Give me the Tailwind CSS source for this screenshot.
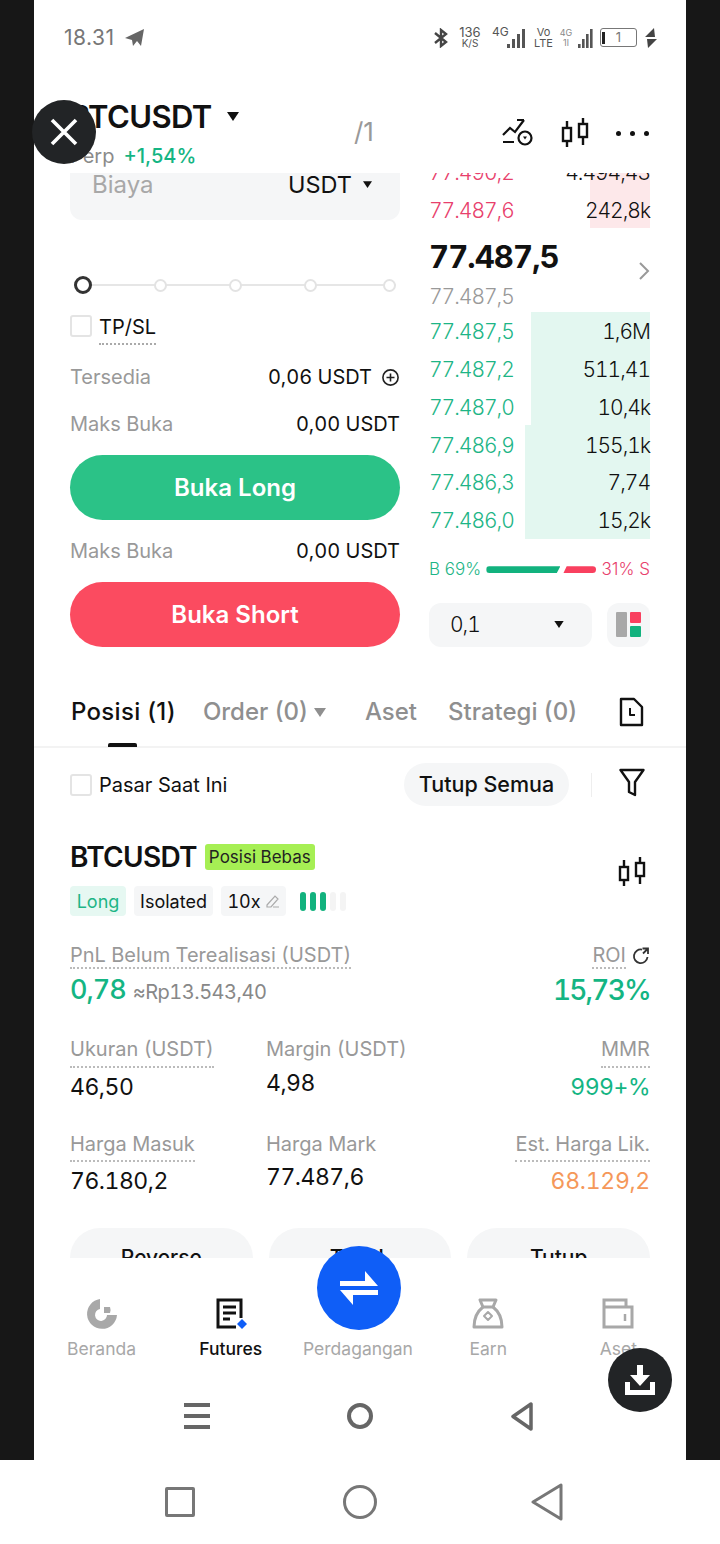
<!DOCTYPE html>
<html lang="id">
<head>
    <meta charset="UTF-8">
    <meta name="viewport" content="width=device-width, initial-scale=1.0">
    <title>BTCUSDT Futures</title>
    <script src="https://cdn.jsdelivr.net/npm/@tailwindcss/browser@4"></script>
</head>
<body class="bg-white">
<div class="relative w-[720px] h-[1544px] overflow-hidden bg-white font-['Inter','Liberation_Sans',sans-serif] text-[#111]">
    <div class="flex h-[1460px]">
        <div class="w-[34px] bg-[#171717]"></div>
        <main class="w-[652px] flex flex-col bg-white">

            <!-- status bar -->
            <div class="h-[75px] flex items-center justify-between pl-[30px] pr-[29px] text-[#666]">
                <div class="flex items-center gap-[10px]">
                    <span class="text-[21px] tracking-[0.5px] text-[#777]">18.31</span>
                    <svg class="w-[20px] h-[18px]" viewBox="0 0 20 18" fill="#666"><path d="M19 0 L0 9 L7 11 L8 17 L12 12 L16 17 Z"/></svg>
                </div>
                <div class="flex items-center text-[#555]">
                    <svg class="w-[16px] h-[20px] mr-[10px]" viewBox="0 0 16 20" fill="none" stroke="#444" stroke-width="2.4"><path d="M2 5 L13 14 L8 18 V2 L13 6 L2 15"/></svg>
                    <div class="flex flex-col items-center leading-[11px] w-[22px] mr-[11px]"><span class="text-[13px]">136</span><span class="text-[10px]">K/S</span></div>
                    <span class="text-[12px] w-[15px] -mt-[12px]">4G</span>
                    <svg class="w-[20px] h-[22px] mr-[7px]" viewBox="0 0 20 22" fill="#555"><rect x="0" y="17" width="3" height="4"/><rect x="5" y="12" width="3" height="9"/><rect x="10" y="7" width="3" height="14"/><rect x="15" y="2" width="3" height="19"/></svg>
                    <div class="flex flex-col items-center leading-[11px] text-[11px] w-[19px] mr-[6px]"><span>Vo</span><span>LTE</span></div>
                    <div class="flex flex-col items-center leading-[10px] text-[9px] text-[#888] w-[14px]"><span>4G</span><span>1l</span></div>
                    <svg class="w-[20px] h-[22px] mr-[7px]" viewBox="0 0 20 22" fill="#555"><rect x="5" y="17" width="2.6" height="4"/><rect x="9" y="12" width="2.6" height="9"/><rect x="13" y="7" width="2.6" height="14"/><rect x="17" y="2" width="2.6" height="19"/></svg>
                    <div class="relative w-[37px] h-[19px] border-[1.5px] border-[#777] rounded-[3px] flex items-center justify-center text-[13px] text-[#777] leading-none">
                        <span class="absolute left-[1px] top-[3px] bottom-[2px] w-[3px] bg-[#222]"></span>1
                    </div>
                    <svg class="w-[12px] h-[20px] ml-[8px]" viewBox="0 0 12 20" fill="#444"><path d="M9 0 L0 9 H10 Z M3 20 L12 11 H2 Z"/></svg>
                </div>
            </div>

            <!-- pair header -->
            <div class="relative h-[98px] bg-white flex justify-between px-[36px]">
                <div class="pt-[23px]">
                    <div class="flex items-center gap-[15px] h-[36px]">
                        <span class="text-[31px] font-semibold tracking-[-0.6px] leading-none">BTCUSDT</span>
                        <svg class="w-[12px] h-[9px] mt-[1px]" viewBox="0 0 12 9" fill="#111"><path d="M0 0 H12 L6 9 Z"/></svg>
                    </div>
                    <div class="flex items-center gap-[9px] mt-[11px] text-[20px] leading-[22px]">
                        <span class="text-[#8a8a8a]">Perp</span>
                        <span class="text-[#14b583] font-medium">+1,54%</span>
                    </div>
                </div>
                <span class="absolute left-[320px] top-[43px] text-[26px] leading-[28px] text-[#999]">/1</span>
                <div class="flex items-start gap-[27px] pt-[43px] pr-[1px]">
                    <svg class="w-[32px] h-[30px]" viewBox="0 0 32 30" fill="none" stroke="#111" stroke-width="2.2"><path d="M1 17 L8 10 L13 14 L22 2 M15 2 H22 M1 24 H12"/><circle cx="23" cy="20" r="6.5"/><path d="M21 18.5 H25 L23 21.5 Z" fill="#111" stroke="none"/></svg>
                    <svg class="w-[28px] h-[30px]" viewBox="0 0 28 30" fill="none" stroke="#111" stroke-width="2.4"><rect x="2" y="10" width="8" height="13"/><rect x="18" y="6" width="8" height="13"/><path d="M6 3 V10 M6 23 V29 M22 0 V6 M22 19 V27"/></svg>
                    <div class="flex gap-[9px] pt-[13px]">
                        <span class="w-[5px] h-[5px] rounded-full bg-[#111]"></span>
                        <span class="w-[5px] h-[5px] rounded-full bg-[#111]"></span>
                        <span class="w-[5px] h-[5px] rounded-full bg-[#111]"></span>
                    </div>
                </div>
            </div>

            <!-- order form and book -->
            <div class="h-[503px] overflow-hidden flex gap-[29px] px-[36px]">
                <div class="w-[330px] flex flex-col">
                    <div class="h-[47px] shrink-0 bg-[#f5f6f7] rounded-b-[12px] flex justify-between pl-[22px] pr-[28px]">
                        <span class="text-[24px] leading-[24px] text-[#a8a8a8]">Biaya</span>
                        <div class="flex items-start gap-[11px]">
                            <span class="text-[23.5px] leading-[24px]">USDT</span>
                            <svg class="w-[9px] h-[7px] mt-[8px]" viewBox="0 0 12 9" fill="#111"><path d="M0 0 H12 L6 9 Z"/></svg>
                        </div>
                    </div>
                    <!-- leverage slider -->
                    <div class="relative h-[20px] mt-[55px] mx-[4px] flex items-center gap-[62px]">
                        <div class="absolute inset-x-0 top-[9px] h-[2px] bg-[#e6e6e6]"></div>
                        <span class="relative w-[18px] h-[18px] rounded-full border-[3px] border-[#333] bg-white"></span>
                        <span class="relative w-[13px] h-[13px] rounded-full border-2 border-[#e3e3e3] bg-white"></span>
                        <span class="relative w-[13px] h-[13px] rounded-full border-2 border-[#e3e3e3] bg-white"></span>
                        <span class="relative w-[13px] h-[13px] rounded-full border-2 border-[#e3e3e3] bg-white"></span>
                        <span class="relative w-[13px] h-[13px] ml-[4px] rounded-full border-2 border-[#e3e3e3] bg-white"></span>
                    </div>
                    <div class="flex items-start gap-[7px] mt-[20px] h-[33px]">
                        <span class="w-[22px] h-[22px] border-2 border-[#e4e4e4] rounded-[3px]"></span>
                        <span class="text-[20px] leading-[24px] pb-[4px] border-b-2 border-dotted border-[#aaa]">TP/SL</span>
                    </div>
                    <div class="flex items-center justify-between h-[26px] mt-[16px]">
                        <span class="text-[20px] text-[#999]">Tersedia</span>
                        <div class="flex items-center gap-[9px] text-[20px] tabular-nums">
                            <span>0,06 USDT</span>
                            <svg class="w-[19px] h-[19px]" viewBox="0 0 19 19" fill="none" stroke="#222" stroke-width="1.6"><circle cx="9.5" cy="9.5" r="7.6"/><path d="M9.5 5.5 V13.5 M5.5 9.5 H13.5"/></svg>
                        </div>
                    </div>
                    <div class="flex items-center justify-between h-[26px] mt-[21px] text-[20px] tabular-nums">
                        <span class="text-[#999]">Maks Buka</span>
                        <span>0,00 USDT</span>
                    </div>
                    <button class="h-[65px] shrink-0 mt-[18px] rounded-full bg-[#2bc287] text-white text-[24px] font-semibold">Buka Long</button>
                    <div class="flex items-center justify-between h-[26px] mt-[18px] text-[20px] tabular-nums">
                        <span class="text-[#999]">Maks Buka</span>
                        <span>0,00 USDT</span>
                    </div>
                    <button class="h-[65px] shrink-0 mt-[18px] rounded-full bg-[#fb4b60] text-white text-[24px] font-semibold">Buka Short</button>
                </div>

                <div class="w-[221px] flex flex-col text-[21px] tabular-nums tracking-[-1px] font-[350]">
                    <div class="h-[19px] shrink-0 overflow-hidden relative">
                        <div class="absolute right-0 top-0 bottom-0 w-[60px] bg-[#fde8ea]"></div>
                        <div class="absolute left-0 right-0 -top-[19px] h-[38px] flex justify-between items-center">
                            <span class="text-[#e8406c]">77.490,2</span>
                            <span class="relative">4.494,43</span>
                        </div>
                    </div>
                    <div class="relative h-[36px] shrink-0 pt-[1px] flex justify-between items-center">
                        <div class="absolute right-0 top-0 bottom-0 w-[60px] bg-[#fde8ea]"></div>
                        <span class="relative text-[#e8406c]">77.487,6</span>
                        <span class="relative">242,8k</span>
                    </div>
                    <div class="flex justify-between items-center h-[50px] shrink-0 mt-[4px]">
                        <span class="text-[31px] font-bold tracking-[-0.9px]">77.487,5</span>
                        <svg class="w-[12px] h-[20px] mt-[28px]" viewBox="0 0 12 20" fill="none" stroke="#999" stroke-width="2"><path d="M2 2 L10 10 L2 18"/></svg>
                    </div>
                    <div class="h-[30px] shrink-0 leading-[30px] text-[#999]">77.487,5</div>
                    <div class="relative h-[37.8px] shrink-0 pt-[2px] flex justify-between items-center">
                        <div class="absolute right-0 top-0 bottom-0 w-[119px] bg-[#e3f7f0]"></div>
                        <span class="relative text-[#1db586]">77.487,5</span><span class="relative">1,6M</span>
                    </div>
                    <div class="relative h-[37.8px] shrink-0 pt-[2px] flex justify-between items-center">
                        <div class="absolute right-0 top-0 bottom-0 w-[119px] bg-[#e3f7f0]"></div>
                        <span class="relative text-[#1db586]">77.487,2</span><span class="relative">511,41</span>
                    </div>
                    <div class="relative h-[37.8px] shrink-0 pt-[2px] flex justify-between items-center">
                        <div class="absolute right-0 top-0 bottom-0 w-[119px] bg-[#e3f7f0]"></div>
                        <span class="relative text-[#1db586]">77.487,0</span><span class="relative">10,4k</span>
                    </div>
                    <div class="relative h-[37.8px] shrink-0 pt-[2px] flex justify-between items-center">
                        <div class="absolute right-0 top-0 bottom-0 w-[125px] bg-[#e3f7f0]"></div>
                        <span class="relative text-[#1db586]">77.486,9</span><span class="relative">155,1k</span>
                    </div>
                    <div class="relative h-[37.8px] shrink-0 pt-[2px] flex justify-between items-center">
                        <div class="absolute right-0 top-0 bottom-0 w-[125px] bg-[#e3f7f0]"></div>
                        <span class="relative text-[#1db586]">77.486,3</span><span class="relative">7,74</span>
                    </div>
                    <div class="relative h-[37.8px] shrink-0 pt-[2px] flex justify-between items-center">
                        <div class="absolute right-0 top-0 bottom-0 w-[125px] bg-[#e3f7f0]"></div>
                        <span class="relative text-[#1db586]">77.486,0</span><span class="relative">15,2k</span>
                    </div>
                    <!-- buy/sell ratio -->
                    <div class="flex items-center justify-between h-[24px] shrink-0 mt-[19px] text-[17px] normal-nums tracking-normal">
                        <span class="text-[#1db586]">B 69%</span>
                        <div class="flex items-center gap-[3px]">
                            <span class="w-[74px] h-[7px] rounded-l-full bg-[#12b27e] [clip-path:polygon(0_0,100%_0,95%_100%,0_100%)]"></span>
                            <span class="w-[33px] h-[7px] rounded-r-full bg-[#f9405f] [clip-path:polygon(10%_0,100%_0,100%_100%,0_100%)]"></span>
                        </div>
                        <span class="text-[#e8406c]">31% S</span>
                    </div>
                    <div class="flex gap-[15px] mt-[21px]">
                        <div class="w-[163px] h-[44px] rounded-[12px] bg-[#f5f6f7] flex items-center justify-between pl-[21px] pr-[28px]">
                            <span class="text-[21px]">0,1</span>
                            <svg class="w-[10px] h-[7px]" viewBox="0 0 12 9" fill="#111"><path d="M0 0 H12 L6 9 Z"/></svg>
                        </div>
                        <div class="w-[43px] h-[44px] rounded-[12px] bg-[#f5f6f7] flex items-center justify-center gap-[3px]">
                            <span class="w-[11px] h-[25px] bg-[#a8a8a8] rounded-[1px]"></span>
                            <div class="flex flex-col gap-[3px]">
                                <span class="w-[11px] h-[11px] bg-[#f9405f] rounded-[1px]"></span>
                                <span class="w-[11px] h-[11px] bg-[#12b27e] rounded-[1px]"></span>
                            </div>
                        </div>
                    </div>
                </div>
            </div>

            <!-- positions tabs -->
            <div class="relative h-[72px] border-b-2 border-[#f3f3f3] flex items-start pl-[37px] pt-[21px] text-[24px] leading-[28px] font-medium text-[#8f8f8f]">
                <span class="mt-[1px] text-[#111] tracking-[0.3px]">Posisi (1)</span>
                <span class="mt-[1px] ml-[27px]">Order (0)</span>
                <svg class="w-[12px] h-[9px] mt-[11px] ml-[6px]" viewBox="0 0 12 9" fill="#8f8f8f"><path d="M0 0 H12 L6 9 Z"/></svg>
                <span class="mt-[1px] ml-[39px]">Aset</span>
                <span class="mt-[1px] ml-[31px]">Strategi (0)</span>
                <svg class="w-[25px] h-[30px] ml-[42px]" viewBox="0 0 25 30" fill="none" stroke="#111" stroke-width="2.4" stroke-linejoin="round"><path d="M2 2 H15 L23 10 V28 H2 Z"/><path d="M11 11 V18 H16" stroke-width="2"/></svg>
                <span class="absolute left-[74px] bottom-[-1px] w-[29px] h-[4px] rounded-t-[2px] bg-[#111]"></span>
            </div>

            <!-- positions filter -->
            <div class="h-[74px] shrink-0 flex items-center justify-between pl-[36px] pr-[41px]">
                <div class="flex items-center gap-[7px]">
                    <span class="w-[22px] h-[22px] border-2 border-[#e4e4e4] rounded-[3px]"></span>
                    <span class="text-[20px]">Pasar Saat Ini</span>
                </div>
                <div class="flex items-center">
                    <span class="h-[43px] w-[165px] rounded-full bg-[#f5f6f7] flex items-center justify-center text-[21.5px] font-medium -mt-[2px]">Tutup Semua</span>
                    <span class="w-[1px] h-[24px] bg-[#eee] ml-[22px] mr-[27px]"></span>
                    <svg class="w-[26px] h-[29px] -mt-[6px]" viewBox="0 0 26 29" fill="none" stroke="#111" stroke-width="2.4" stroke-linejoin="round"><path d="M1.5 2 H24.5 L16 14 V27 L10 24 V14 Z"/></svg>
                </div>
            </div>

            <!-- position card -->
            <div class="relative h-[436px] shrink-0 overflow-hidden px-[36px] tabular-nums">
                <div class="flex items-center gap-[8px] mt-[17px] h-[36px]">
                    <span class="text-[28px] font-semibold tracking-[-0.7px]">BTCUSDT</span>
                    <span class="h-[26px] px-[4px] rounded-[3px] bg-[#a6ef54] text-[17px] leading-[26px] text-[#222]">Posisi Bebas</span>
                </div>
                <svg class="absolute left-[584px] top-[35px] w-[28px] h-[30px]" viewBox="0 0 28 30" fill="none" stroke="#111" stroke-width="2.4"><rect x="2" y="10" width="8" height="13"/><rect x="18" y="6" width="8" height="13"/><path d="M6 3 V10 M6 23 V29 M22 0 V6 M22 19 V27"/></svg>
                <div class="flex items-center gap-[8px] mt-[11px] h-[30px] text-[18px]">
                    <span class="h-[30px] w-[56px] rounded-[4px] bg-[#e6f8f2] text-[#1db586] flex items-center justify-center">Long</span>
                    <span class="h-[30px] w-[79px] rounded-[4px] bg-[#f5f6f7] flex items-center justify-center">Isolated</span>
                    <span class="h-[30px] w-[65px] rounded-[4px] bg-[#f5f6f7] flex items-center justify-center gap-[4px]">10x
                        <svg class="w-[15px] h-[15px]" viewBox="0 0 15 15" fill="none" stroke="#aaa" stroke-width="1.2"><path d="M2 11 L10 2 L13 5 L6 13 H2 Z M14 13 H8"/></svg>
                    </span>
                    <div class="flex gap-[4px] ml-[6px]">
                        <span class="w-[6px] h-[19px] rounded-full bg-[#12b27e]"></span>
                        <span class="w-[6px] h-[19px] rounded-full bg-[#12b27e]"></span>
                        <span class="w-[6px] h-[19px] rounded-full bg-[#12b27e]"></span>
                        <span class="w-[6px] h-[19px] rounded-full bg-[#f4f4f4]"></span>
                        <span class="w-[6px] h-[19px] rounded-full bg-[#f4f4f4]"></span>
                    </div>
                </div>

                <div class="flex justify-between items-start mt-[27px]">
                    <div>
                        <span class="inline-block text-[20px] leading-[24px] text-[#999] border-b-2 border-dotted border-[#bbb]">PnL Belum Terealisasi (USDT)</span>
                        <div class="flex items-baseline gap-[7px] mt-[4px]">
                            <span class="text-[27px] font-medium tracking-[-1px] text-[#14b583] leading-[34px]">0,78</span>
                            <span class="text-[20px] tracking-[-0.5px] text-[#888]">≈Rp13.543,40</span>
                        </div>
                    </div>
                    <div class="flex flex-col items-end">
                        <div class="flex items-center gap-[6px]">
                            <span class="text-[20px] leading-[24px] text-[#999] border-b-2 border-dotted border-[#bbb]">ROI</span>
                            <svg class="w-[18px] h-[18px]" viewBox="0 0 18 18" fill="none" stroke="#333" stroke-width="1.8"><path d="M15.5 10 A6.8 6.8 0 1 1 10 2.6"/><path d="M10.5 1.5 H16 V7 M16 1.5 L11 6.5"/></svg>
                        </div>
                        <span class="text-[28px] font-medium tracking-[-1.8px] text-[#14b583] leading-[34px] mt-[4px]">15,73%</span>
                    </div>
                </div>

                <div class="grid grid-cols-[196px_1fr_auto] mt-[29px]">
                    <div>
                        <span class="inline-block text-[20px] leading-[26px] pb-[4px] text-[#999] border-b-2 border-dotted border-[#bbb]">Ukuran (USDT)</span>
                        <div class="text-[23px] tracking-[-0.5px] leading-[30px] mt-[4px]">46,50</div>
                    </div>
                    <div>
                        <span class="inline-block text-[20px] leading-[26px] text-[#999]">Margin (USDT)</span>
                        <div class="text-[23px] tracking-[-0.5px] leading-[30px] mt-[6px]">4,98</div>
                    </div>
                    <div class="flex flex-col items-end">
                        <span class="text-[20px] leading-[26px] pb-[4px] text-[#999] border-b-2 border-dotted border-[#bbb]">MMR</span>
                        <span class="text-[23px] leading-[30px] mt-[4px] text-[#14b583] tracking-[-0.5px]">999+%</span>
                    </div>
                </div>

                <div class="grid grid-cols-[196px_1fr_auto] mt-[29px]">
                    <div>
                        <span class="inline-block text-[20px] leading-[26px] pb-[3px] text-[#999] border-b-2 border-dotted border-[#bbb]">Harga Masuk</span>
                        <div class="text-[23px] tracking-[-0.5px] leading-[30px] mt-[4px]">76.180,2</div>
                    </div>
                    <div>
                        <span class="inline-block text-[20px] leading-[26px] text-[#999]">Harga Mark</span>
                        <div class="text-[23px] tracking-[-0.5px] leading-[30px] mt-[5px]">77.487,6</div>
                    </div>
                    <div class="flex flex-col items-end">
                        <span class="text-[20px] leading-[26px] pb-[3px] text-[#999] border-b-2 border-dotted border-[#bbb]">Est. Harga Lik.</span>
                        <span class="text-[23px] tracking-[-0.3px] leading-[30px] mt-[4px] text-[#f5985a]">68.129,2</span>
                    </div>
                </div>

                <div class="grid grid-cols-3 gap-[16px] mt-[32px]">
                    <span class="h-[60px] rounded-[30px] bg-[#f5f6f7] text-center text-[21px] font-medium leading-[60px]">Reverse</span>
                    <span class="h-[60px] rounded-[30px] bg-[#f5f6f7] text-center text-[21px] font-medium leading-[60px]">TP/SL</span>
                    <span class="h-[60px] rounded-[30px] bg-[#f5f6f7] text-center text-[21px] font-medium leading-[60px]">Tutup</span>
                </div>
            </div>

            <!-- bottom tab bar -->
            <nav class="h-[118px] shrink-0 bg-white grid grid-cols-5 px-[3px] pt-[40px] text-[17.5px] text-center text-[#a8a8a8]">
                <div class="flex flex-col items-center">
                    <svg class="w-[32px] h-[32px]" viewBox="0 0 32 32" fill="none"><path d="M14 1 A15 15 0 1 0 31 17 H21 A6 6 0 1 1 14 11 Z" fill="#a8a8a8"/><path d="M18 9 H24 A8 8 0 0 1 24 15 H18 Z" fill="#a8a8a8"/></svg>
                    <span class="mt-[8px] leading-[22px]">Beranda</span>
                </div>
                <div class="flex flex-col items-center text-[#111]">
                    <svg class="w-[32px] h-[32px]" viewBox="0 0 32 32" fill="none"><path d="M26 20 V2 H3 V29 H21" stroke="#111" stroke-width="3"/><path d="M8 9 H21 M8 15 H21 M8 21 H15" stroke="#111" stroke-width="3"/><path d="M27 21 L32 26 L27 31 L22 26 Z" fill="#0f5ef7"/></svg>
                    <span class="mt-[8px] leading-[22px] font-medium">Futures</span>
                </div>
                <div class="flex flex-col items-center pr-[4px]">
                    <div class="h-[32px]"></div>
                    <span class="mt-[8px] leading-[22px]">Perdagangan</span>
                </div>
                <div class="flex flex-col items-center pr-[2px]">
                    <svg class="w-[32px] h-[32px]" viewBox="0 0 32 32" fill="none" stroke="#a8a8a8" stroke-width="3" stroke-linejoin="round"><path d="M8 2 H24 L21 9 H11 Z"/><path d="M11 9 Q2 16 2 29 H30 Q30 16 21 9"/><path d="M16 14 L20 18 L16 22 L12 18 Z" stroke-width="2"/></svg>
                    <span class="mt-[8px] leading-[22px]">Earn</span>
                </div>
                <div class="flex flex-col items-center">
                    <svg class="w-[32px] h-[32px]" viewBox="0 0 32 32" fill="none" stroke="#a8a8a8" stroke-width="3"><path d="M2 2 H24 V9 H30 V29 H2 Z M2 9 H24"/><path d="M23 16 V23" stroke-width="2.5"/></svg>
                    <span class="mt-[8px] leading-[22px]">Aset</span>
                </div>
            </nav>

            <!-- app nav keys -->
            <div class="h-[84px] shrink-0 bg-white flex items-center justify-center gap-[137px] pb-[4px] pr-[2px]">
                <svg class="w-[26px] h-[26px]" viewBox="0 0 26 26" fill="#666"><rect width="26" height="4"/><rect y="11" width="26" height="4"/><rect y="22" width="26" height="4"/></svg>
                <span class="w-[26px] h-[26px] rounded-full border-[4px] border-[#666]"></span>
                <svg class="w-[24px] h-[29px]" viewBox="0 0 24 29" fill="none" stroke="#666" stroke-width="3.5" stroke-linejoin="round"><path d="M21 2 V27 L3 14.5 Z"/></svg>
            </div>
        </main>
        <div class="w-[34px] bg-[#171717]"></div>
    </div>

    <!-- system nav keys -->
    <div class="h-[84px] flex items-center pl-[165px]">
        <span class="w-[30px] h-[30px] border-[3px] border-[#777] rounded-[2px]"></span>
        <span class="w-[34px] h-[34px] ml-[148px] rounded-full border-[3px] border-[#777]"></span>
        <svg class="w-[34px] h-[38px] ml-[153px]" viewBox="0 0 34 38" fill="none" stroke="#777" stroke-width="3" stroke-linejoin="round"><path d="M31 2 V36 L3 19 Z"/></svg>
    </div>

    <!-- floating actions -->
    <div class="absolute left-[32px] top-[100px] w-[64px] h-[64px] rounded-full bg-[#222426] flex items-center justify-center">
        <svg class="w-[28px] h-[28px]" viewBox="0 0 28 28" stroke="#fff" stroke-width="3.6"><path d="M2 2 L26 26 M26 2 L2 26"/></svg>
    </div>
    <div class="absolute left-[608px] top-[1348px] w-[64px] h-[64px] rounded-full bg-[#222426] flex items-center justify-center">
        <svg class="w-[32px] h-[32px]" viewBox="0 0 32 32" fill="#fff"><path d="M13 1 H19 V11 H26 L16 22 L6 11 H13 Z"/><path d="M1 18 H6 V26 H26 V18 H31 V31 H1 Z"/></svg>
    </div>
    <div class="absolute left-[317px] top-[1246px] w-[84px] h-[84px] rounded-full bg-[#0f5ef7] flex items-center justify-center">
        <svg class="w-[40px] h-[40px]" viewBox="0 0 40 40" fill="#fff"><path d="M1 13 H26 V3 L39 18 H1 Z"/><path d="M39 27 H14 V37 L1 22 H39 Z"/></svg>
    </div>
</div>
</body>
</html>
